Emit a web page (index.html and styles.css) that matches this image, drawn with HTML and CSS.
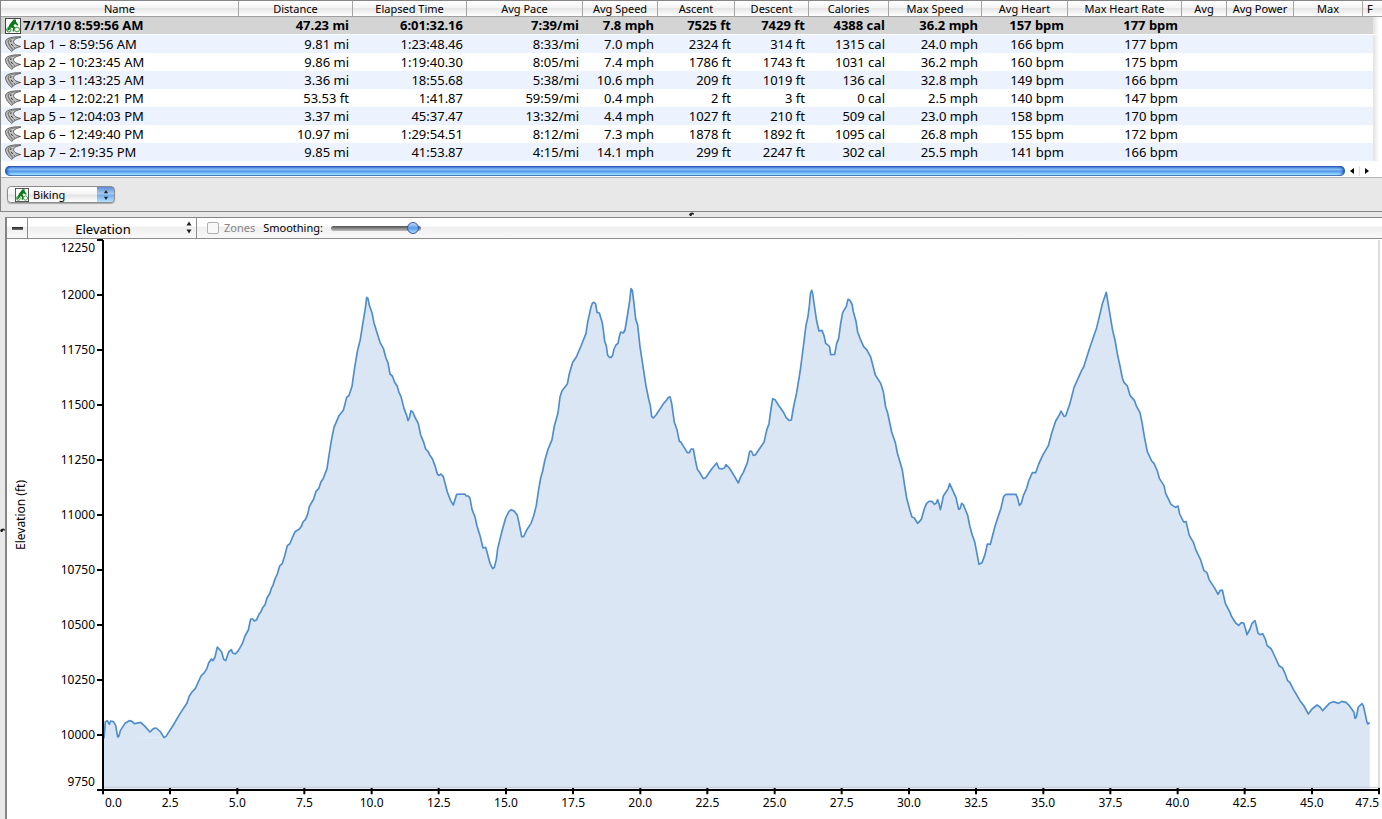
FILE: index.html
```html
<!DOCTYPE html>
<html lang="en">
<head>
<meta charset="utf-8">
<title>Activity – 7/17/10 8:59:56 AM</title>
<link rel="stylesheet" href="styles.css">
</head>
<body>
<svg class="defs" aria-hidden="true">
  <symbol id="bike" viewBox="0 0 16 16">
    <rect x="0.5" y="0.5" width="15" height="15" fill="#fff" stroke="#444"/>
    <path d="M8.500 1.500h2.500v2l2.500 3.500-1 .8L10 6 8.500 7.500l1.500 2-1 4H7.500L8 10 6 9.500 4.500 12 2 13l1-3 1.500-3.500z" fill="#0c7a18"/>
    <circle cx="3.800" cy="11.800" r="2.200" fill="none" stroke="#2e9236"/>
    <circle cx="12" cy="11.500" r="2.400" fill="#fff" stroke="#2e9236"/>
  </symbol>
  <symbol id="road" viewBox="0 0 16 16">
    <path d="M15.800.8C10 .6 4 1.400 1.500 3.500-.2 5.200.6 8 2 10.200c1.400 2.300 3 4 4.800 5.200 2-2.200 4.500-4.100 8.800-4.900-2.500-.4-5-1.500-6.300-3C7.500 5.200 8.500 2.800 15.800 1.300z" fill="#c2c2c2" stroke="#505050" stroke-width=".9"/>
    <path d="M12 1.500C7 2.200 3.500 3 3.200 5.200c-.2 2.600 2.300 5.800 4.600 8.300" fill="none" stroke="#777" stroke-width="1.200"/>
    <path d="M6 4.300 5.700 6M6.200 7.800l1.300 2M8.600 11l1 .8" fill="none" stroke="#222"/>
  </symbol>
  <symbol id="updown" viewBox="0 0 6 12">
    <path d="M3 0 5.500 4h-5zM3 12 .500 8h5z" fill="#222"/>
  </symbol>
</svg>

<main class="window">
  <section class="laps">
    <table class="lap-table">
      <colgroup>
        <col class="w-name"><col class="w-distance"><col class="w-time"><col class="w-pace"><col class="w-speed"><col class="w-ascent"><col class="w-descent"><col class="w-calories"><col class="w-max-speed"><col class="w-heart"><col class="w-max-heart"><col class="w-avg"><col class="w-power"><col class="w-max"><col><col class="w-track">
      </colgroup>
      <thead>
        <tr><th>Name</th><th>Distance</th><th>Elapsed Time</th><th>Avg Pace</th><th>Avg Speed</th><th>Ascent</th><th>Descent</th><th>Calories</th><th>Max Speed</th><th>Avg Heart</th><th>Max Heart Rate</th><th>Avg</th><th>Avg Power</th><th>Max</th><th class="last" colspan="2">F</th></tr>
      </thead>
      <tbody>
        <tr class="selected"><td><span class="name"><svg><use href="#bike"/></svg>7/17/10 8:59:56 AM</span></td><td>47.23 mi</td><td>6:01:32.16</td><td>7:39/mi</td><td>7.8 mph</td><td>7525 ft</td><td>7429 ft</td><td>4388 cal</td><td>36.2 mph</td><td>157 bpm</td><td>177 bpm</td><td></td><td></td><td></td><td></td><td class="track"></td></tr>
        <tr><td><span class="name"><svg><use href="#road"/></svg>Lap 1 – 8:59:56 AM</span></td><td>9.81 mi</td><td>1:23:48.46</td><td>8:33/mi</td><td>7.0 mph</td><td>2324 ft</td><td>314 ft</td><td>1315 cal</td><td>24.0 mph</td><td>166 bpm</td><td>177 bpm</td><td></td><td></td><td></td><td></td><td class="track"></td></tr>
        <tr><td><span class="name"><svg><use href="#road"/></svg>Lap 2 – 10:23:45 AM</span></td><td>9.86 mi</td><td>1:19:40.30</td><td>8:05/mi</td><td>7.4 mph</td><td>1786 ft</td><td>1743 ft</td><td>1031 cal</td><td>36.2 mph</td><td>160 bpm</td><td>175 bpm</td><td></td><td></td><td></td><td></td><td class="track"></td></tr>
        <tr><td><span class="name"><svg><use href="#road"/></svg>Lap 3 – 11:43:25 AM</span></td><td>3.36 mi</td><td>18:55.68</td><td>5:38/mi</td><td>10.6 mph</td><td>209 ft</td><td>1019 ft</td><td>136 cal</td><td>32.8 mph</td><td>149 bpm</td><td>166 bpm</td><td></td><td></td><td></td><td></td><td class="track"></td></tr>
        <tr><td><span class="name"><svg><use href="#road"/></svg>Lap 4 – 12:02:21 PM</span></td><td>53.53 ft</td><td>1:41.87</td><td>59:59/mi</td><td>0.4 mph</td><td>2 ft</td><td>3 ft</td><td>0 cal</td><td>2.5 mph</td><td>140 bpm</td><td>147 bpm</td><td></td><td></td><td></td><td></td><td class="track"></td></tr>
        <tr><td><span class="name"><svg><use href="#road"/></svg>Lap 5 – 12:04:03 PM</span></td><td>3.37 mi</td><td>45:37.47</td><td>13:32/mi</td><td>4.4 mph</td><td>1027 ft</td><td>210 ft</td><td>509 cal</td><td>23.0 mph</td><td>158 bpm</td><td>170 bpm</td><td></td><td></td><td></td><td></td><td class="track"></td></tr>
        <tr><td><span class="name"><svg><use href="#road"/></svg>Lap 6 – 12:49:40 PM</span></td><td>10.97 mi</td><td>1:29:54.51</td><td>8:12/mi</td><td>7.3 mph</td><td>1878 ft</td><td>1892 ft</td><td>1095 cal</td><td>26.8 mph</td><td>155 bpm</td><td>172 bpm</td><td></td><td></td><td></td><td></td><td class="track"></td></tr>
        <tr><td><span class="name"><svg><use href="#road"/></svg>Lap 7 – 2:19:35 PM</span></td><td>9.85 mi</td><td>41:53.87</td><td>4:15/mi</td><td>14.1 mph</td><td>299 ft</td><td>2247 ft</td><td>302 cal</td><td>25.5 mph</td><td>141 bpm</td><td>166 bpm</td><td></td><td></td><td></td><td></td><td class="track"></td></tr>
      </tbody>
    </table>
    <div class="scrollbar">
      <div class="thumb"></div>
      <button type="button" aria-label="Scroll left"><svg viewBox="0 0 4 6"><path d="M4 0v6L0 3z"/></svg></button>
      <button type="button" aria-label="Scroll right"><svg viewBox="0 0 4 6"><path d="M0 0v6l4-3z"/></svg></button>
    </div>
    <div class="activity">
      <div class="popup">
        <svg class="popup-icon"><use href="#bike"/></svg>
        <select aria-label="Activity type"><option>Biking</option></select>
        <svg class="popup-arrows"><use href="#updown"/></svg>
      </div>
    </div>
  </section>

  <div class="splitter"><svg class="grip" viewBox="0 0 5 4"><path d="M0 2.500C1 .5 3.500-.5 5 1.500v1H3L2.500 4H1z"/></svg></div>

  <div class="lower">
    <div class="side-splitter"><svg class="grip" viewBox="0 0 5 4"><path d="M0 2.500C1 .5 3.500-.5 5 1.500v1H3L2.500 4H1z"/></svg></div>
    <section class="panel">
      <div class="toolbar">
        <button type="button" class="collapse" aria-label="Collapse"><span></span></button>
        <div class="metric">
          <select aria-label="Metric"><option>Elevation</option></select>
          <svg class="metric-arrows"><use href="#updown"/></svg>
        </div>
        <label class="zones"><input type="checkbox" disabled>Zones</label>
        <label class="smoothing">Smoothing:<input type="range" min="0" max="100" value="97"></label>
      </div>
      <div class="chart">
        <div class="axis-title">Elevation (ft)</div>
        <div class="y-labels"><span>12250</span><span>12000</span><span>11750</span><span>11500</span><span>11250</span><span>11000</span><span>10750</span><span>10500</span><span>10250</span><span>10000</span><span>9750</span></div>
        <div class="plot">
        <svg viewBox="309 -120 3828 1650" preserveAspectRatio="none" role="img" aria-label="Elevation by distance">
          <defs>
            <path id="profile" d="M312 1375 316 1325 322 1322 328 1333 332 1323 340 1325 347 1336 353 1371 357 1368 361 1352 375 1330 388 1322 396 1324 403 1331 422 1327 435 1339 450 1356 460 1346 469 1344 482 1356 492 1373 498 1369 520 1335 540 1301 561 1269 568 1248 576 1236 586 1226 603 1188 613 1178 621 1165 626 1149 634 1137 639 1142 645 1131 652 1101 665 1116 671 1138 677 1142 686 1116 694 1109 698 1119 706 1122 715 1112 727 1091 735 1068 745 1050 752 1017 758 1017 763 1023 770 1019 777 1003 783 995 788 983 795 974 801 954 810 939 814 925 819 916 825 897 832 882 839 858 847 850 854 828 862 797 869 792 885 755 898 747 904 739 909 726 916 719 923 703 928 680 941 657 948 634 956 626 963 605 969 597 981 566 988 519 994 482 1002 442 1017 407 1030 391 1040 352 1047 346 1056 319 1064 262 1073 210 1081 178 1088 133 1096 85 1100 52 1104 56 1108 76 1116 98 1122 129 1140 187 1150 205 1158 234 1164 249 1170 282 1177 288 1184 307 1192 319 1196 335 1203 350 1212 385 1220 406 1224 422 1228 414 1233 392 1239 397 1243 408 1255 431 1262 465 1270 484 1277 507 1286 517 1289 525 1297 536 1306 560 1312 582 1317 586 1323 582 1330 590 1342 636 1352 662 1360 675 1370 643 1395 642 1398 648 1405 648 1410 655 1416 688 1425 711 1431 738 1440 767 1449 804 1457 802 1462 820 1470 850 1478 866 1483 862 1489 838 1493 806 1505 757 1517 714 1527 694 1534 689 1543 694 1552 706 1558 734 1565 770 1571 770 1580 750 1593 730 1601 708 1609 676 1616 628 1622 594 1628 573 1634 543 1644 508 1656 479 1663 438 1674 399 1680 351 1686 332 1702 312 1708 281 1718 247 1729 231 1743 198 1758 160 1763 127 1773 81 1777 70 1782 67 1787 72 1791 97 1798 99 1806 125 1810 150 1814 183 1819 198 1823 226 1828 232 1834 232 1838 226 1842 207 1848 195 1854 190 1858 170 1862 156 1870 159 1875 150 1882 108 1889 63 1893 26 1897 31 1902 71 1907 117 1913 135 1920 200 1930 266 1938 318 1946 357 1951 377 1955 409 1960 414 1968 405 1991 370 2000 360 2004 353 2010 350 2015 370 2023 427 2031 449 2038 484 2043 487 2062 518 2068 518 2073 507 2080 507 2086 540 2092 568 2098 576 2110 596 2117 593 2135 567 2150 549 2157 565 2165 567 2173 564 2178 554 2188 564 2204 590 2215 609 2221 593 2230 577 2242 548 2249 514 2254 513 2260 526 2266 525 2280 504 2292 487 2300 451 2307 431 2312 393 2318 356 2325 359 2335 375 2350 396 2358 412 2367 421 2374 420 2380 384 2390 338 2401 270 2410 200 2418 136 2424 109 2428 78 2431 42 2435 31 2438 41 2445 90 2450 123 2457 153 2466 151 2472 167 2477 190 2486 197 2489 202 2492 224 2504 223 2510 191 2516 175 2522 130 2528 98 2539 79 2544 58 2549 60 2556 72 2560 95 2568 124 2573 156 2580 175 2591 200 2600 209 2612 231 2619 258 2626 285 2642 310 2650 335 2657 381 2663 399 2675 456 2686 488 2692 519 2707 570 2713 611 2720 654 2730 692 2736 711 2743 714 2753 730 2764 718 2773 686 2780 670 2787 664 2796 664 2803 673 2809 669 2813 659 2817 671 2821 689 2825 673 2830 648 2845 625 2849 611 2868 653 2876 688 2880 686 2885 670 2890 674 2903 706 2910 741 2917 766 2924 785 2937 853 2946 848 2955 824 2962 792 2971 793 2985 739 3003 684 3011 649 3018 643 3048 643 3053 655 3058 676 3064 670 3070 647 3080 625 3086 603 3097 578 3107 578 3117 550 3128 526 3145 497 3155 460 3167 423 3178 405 3183 393 3192 409 3197 408 3210 370 3222 323 3245 271 3251 261 3270 201 3290 143 3308 68 3319 37 3326 80 3338 152 3345 180 3352 221 3360 258 3367 294 3372 307 3382 318 3390 346 3403 361 3410 380 3420 398 3426 427 3434 475 3442 515 3455 543 3462 550 3472 573 3478 595 3492 617 3497 640 3513 673 3527 682 3534 678 3539 702 3551 726 3558 725 3568 766 3580 787 3587 808 3602 840 3612 872 3621 878 3627 898 3645 926 3654 943 3660 932 3667 930 3676 970 3690 997 3694 1008 3707 1029 3716 1036 3724 1028 3731 1029 3736 1045 3741 1064 3750 1047 3756 1030 3765 1022 3769 1038 3774 1059 3780 1064 3788 1061 3797 1080 3801 1096 3814 1107 3828 1137 3837 1157 3847 1163 3855 1180 3863 1202 3870 1208 3880 1228 3900 1262 3912 1278 3925 1302 3936 1287 3951 1275 3960 1281 3968 1292 3988 1270 4000 1265 4016 1270 4025 1264 4038 1267 4048 1277 4062 1297 4065 1315 4069 1311 4075 1281 4086 1271 4090 1277 4097 1308 4101 1327 4104 1332 4109 1327"/>
          </defs>
          <path class="frame" d="M4137-120V1524"/>
          <use class="area" href="#profile"/>
          <path class="area" d="M312 1372 492 1374 620 1300H3900L4109 1328V1526H312z"/>
          <path class="base" d="M312 1522H4137"/>
          <use class="line" href="#profile"/>
          <path class="axis" d="M309-120V1530H4137M291-120H309M291 45H309M291 210H309M291 375H309M291 540H309M291 705H309M291 870H309M291 1035H309M291 1200H309M291 1365H309M291 1530H309M309 1524V1543M510 1524V1543M712 1524V1543M913 1524V1543M1115 1524V1543M1316 1524V1543M1518 1524V1543M1719 1524V1543M1921 1524V1543M2122 1524V1543M2324 1524V1543M2525 1524V1543M2727 1524V1543M2928 1524V1543M3130 1524V1543M3331 1524V1543M3533 1524V1543M3734 1524V1543M3936 1524V1543M4137 1524V1543"/>
        </svg>
        </div>
        <div class="x-labels"><span>0.0</span><span>2.5</span><span>5.0</span><span>7.5</span><span>10.0</span><span>12.5</span><span>15.0</span><span>17.5</span><span>20.0</span><span>22.5</span><span>25.0</span><span>27.5</span><span>30.0</span><span>32.5</span><span>35.0</span><span>37.5</span><span>40.0</span><span>42.5</span><span>45.0</span><span>47.5</span></div>
      </div>
    </section>
  </div>
</main>
</body>
</html>
```
FILE: styles.css
```css
* { box-sizing: border-box; }

body {
  margin: 0;
  background: #e8e8e8;
  color: #000;
  font-family: "Noto Sans", "Open Sans", sans-serif;
  font-size: 11px;
  line-height: 16px;
}

button, select, input { font: inherit; color: inherit; margin: 0; }
button { padding: 0; border: 0; background: none; }
select { appearance: none; border: 0; background: none; outline: 0; }

.defs { position: absolute; width: 0; height: 0; }

.window { display: flex; flex-direction: column; height: 100vh; overflow: hidden; }

/* Lap list */
.laps { border: solid #858585; border-width: 1px 0 1px 1px; }

.lap-table {
  width: 100%;
  table-layout: fixed;
  border-collapse: separate;
  border-spacing: 0;
  background: #fff;
  font-size: 13px;
  line-height: 18px;
  white-space: nowrap;
}
.w-name { width: 238px; }
.w-distance, .w-time { width: 114px; }
.w-pace { width: 116px; }
.w-speed { width: 75px; }
.w-ascent { width: 77px; }
.w-descent { width: 74px; }
.w-calories { width: 80px; }
.w-max-speed { width: 93px; }
.w-heart { width: 86px; }
.w-max-heart { width: 114px; }
.w-avg { width: 45px; }
.w-power { width: 67px; }
.w-max { width: 69px; }
.w-track { width: 9px; }

th {
  height: 16px;
  padding: 0;
  border-right: 1px solid #a6a6a6;
  border-bottom: 1px solid #a0a0a0;
  background: linear-gradient(#fff, #f4f4f4 45%, #e6e6e6 50%, #fff);
  font-size: 11px;
  font-weight: 400;
  line-height: 15px;
}
th.last { padding-left: 4px; border-right: 0; text-align: left; }

td { height: 18px; padding: 0 4px 0 0; text-align: right; }
td:first-child { padding-left: 4px; text-align: left; }
tbody tr:nth-child(even) { background: #ecf2fe; }
.selected { background: #d4d4d4; font-weight: 700; }
.selected td { border-bottom: 1px solid #fff; line-height: 17px; }
td.track { background: linear-gradient(90deg, #e2e2e2, #fff 70%); }
.name { display: flex; align-items: center; gap: 2px; }
.name svg { flex: none; width: 16px; height: 16px; }

.scrollbar {
  display: flex;
  align-items: center;
  height: 17px;
  padding: 4px 9px 0 4px;
  border-bottom: 1px solid #b4b4b4;
  background: #fff;
}
.thumb {
  flex: 1;
  height: 10px;
  border-radius: 5px;
  background: linear-gradient(#2a4fb0, #5f9fe8 20%, #8fc0f4 38%, #4f94e6 50%, #7cc0fa 72%, #a4e4ff 85%, #2c5ea0);
  box-shadow: inset 3px 0 3px -1px #1c50b8, inset -3px 0 3px -1px #1c50b8;
}
.scrollbar button { width: 14px; height: 10px; display: grid; place-items: center; }
.scrollbar button + button { border-left: 1px solid #ddd; }
.scrollbar button svg { width: 4px; height: 6px; }

.activity { padding: 8px 6px; }
.popup { position: relative; width: 108px; height: 17px; }
.popup select {
  width: 100%;
  height: 17px;
  padding: 0 20px 0 25px;
  border: 1px solid #8c8c8c;
  border-radius: 4px;
  background:
    linear-gradient(#5d8cd8, #a9cbf3 45%, #74aeec 55%, #b4e2ff) right / 17px 100% no-repeat,
    linear-gradient(#fff, #f4f4f4 45%, #e4e4e4 55%, #fff);
  box-shadow: 0 1px 1px #aaa;
  line-height: 15px;
}
.popup-icon { position: absolute; left: 8px; top: 2px; width: 14px; height: 14px; pointer-events: none; }
.popup-arrows { position: absolute; right: 6px; top: 4px; width: 6px; height: 10px; pointer-events: none; }

/* Splitters */
.splitter { display: grid; place-items: start center; height: 5px; }
.side-splitter { display: grid; place-items: center; width: 5px; padding-top: 24px; }
.grip { width: 5px; height: 4px; fill: #222; }

/* Chart panel */
.lower { display: flex; flex: 1; min-height: 0; }
.panel {
  display: flex;
  flex: 1;
  flex-direction: column;
  min-width: 0;
  border: solid #858585;
  border-width: 1px 0 0 2px;
  background: #fff;
}
.toolbar {
  display: flex;
  align-items: center;
  height: 21px;
  border-bottom: 1px solid #8c8c8c;
  background: linear-gradient(#fff 40%, #efefef 45%, #f8f8f8);
}
.collapse { display: grid; place-items: center; width: 21px; height: 100%; border-right: 1px solid #8c8c8c; }
.collapse span { width: 11px; height: 3px; background: linear-gradient(#222, #777); }
.metric { position: relative; width: 169px; height: 100%; border-right: 1px solid #8c8c8c; }
.metric select { width: 100%; height: 100%; padding: 2px 18px 0 0; font-size: 13px; text-align-last: center; }
.metric-arrows { position: absolute; right: 4px; top: 3px; width: 6px; height: 13px; pointer-events: none; }
.zones { display: flex; align-items: center; gap: 5px; padding-left: 10px; color: #858585; }
.zones input {
  appearance: none;
  width: 12px;
  height: 12px;
  border: 1px solid #b0b0b0;
  border-radius: 2px;
  background: #f8f8f8;
}
.smoothing { display: flex; align-items: center; gap: 8px; padding-left: 8px; }
.smoothing input { appearance: none; width: 90px; height: 13px; background: none; }
.smoothing input::-webkit-slider-runnable-track {
  height: 5px;
  border-radius: 3px;
  background: linear-gradient(#505050, #888 50%, #c0c0c0);
}
.smoothing input::-webkit-slider-thumb {
  appearance: none;
  width: 12px;
  height: 12px;
  margin-top: -4px;
  border: 1px solid #2f5aa8;
  border-radius: 50%;
  background: linear-gradient(#c8dcf6, #5c9be8 50%, #a6dcff);
}

.chart {
  display: grid;
  flex: 1;
  grid-template-columns: 28px 60px 1fr;
  grid-template-rows: minmax(0, 1fr) 29px;
  min-height: 0;
  padding: 1px 3px 0 0;
  font-size: 12px;
}
.axis-title { align-self: center; justify-self: center; writing-mode: vertical-rl; transform: rotate(180deg); }
.y-labels {
  display: grid;
  grid-template-rows: 1fr repeat(9, 2fr) 1fr;
  align-items: center;
  text-align: right;
}
.y-labels span:first-child { align-self: start; }
.y-labels span:last-child { align-self: end; }
.plot { min-height: 0; padding-left: 8px; }
.plot svg { display: block; width: 100%; height: 100%; overflow: visible; }
.x-labels {
  display: grid;
  grid-column: 3;
  grid-template-columns: minmax(0, 1fr) repeat(18, minmax(0, 2fr)) minmax(0, 1fr);
  padding: 5px 0 0 8px;
  text-align: center;
}
.x-labels span:first-child { padding-left: 2px; text-align: left; }
.x-labels span:last-child { text-align: right; }

.area { fill: #dae6f4; }
.line, .base, .frame, .axis { fill: none; }
.line { stroke: #4f8dcc; stroke-width: 5px; stroke-linejoin: round; }
.base { stroke: #c3cbd6; stroke-width: 3px; }
.frame { stroke: #ddd; stroke-width: 6px; }
.axis { stroke: #000; stroke-width: 6px; }
```
